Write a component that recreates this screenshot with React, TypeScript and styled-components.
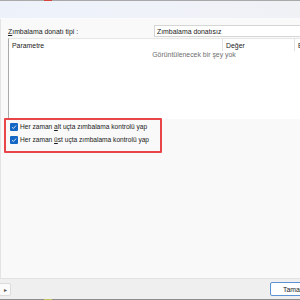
import React from "react";
import styled, { createGlobalStyle } from "styled-components";

const Global = createGlobalStyle`
  html, body { margin: 0; padding: 0; background: #f9f9f9; }
  body { font-family: "Liberation Sans", Arial, sans-serif; }
  * { box-sizing: border-box; }
`;

const Window = styled.div`
  width: 300px;
  height: 300px;
  overflow: hidden;
  display: flex;
  flex-direction: column;
  font-size: 6.9px;
  color: #222;
`;

const EdgeLine = styled.div<{ $accent: string; $base: string }>`
  height: 1px;
  flex: 0 0 1px;
  display: flex;
  background: ${(p) => p.$base};
  &::before {
    content: "";
    width: 8px;
    margin-left: 44px;
    background: ${(p) => p.$accent};
  }
`;

const HeaderStrip = styled.div`
  flex: 0 0 18px;
  background: linear-gradient(90deg, #edf2fa 0%, #eff2f9 50%, #f0f1f5 100%);
  border-bottom: 1px solid #fbfbfd;
`;

const Main = styled.div`
  flex: 1;
  background: #f9f9f9;
  border-left: 1px solid #e4e4e4;
  border-bottom: 1px solid #e2e2e2;
  display: flex;
  flex-direction: column;
  padding-top: 6px;
`;

const FormRow = styled.div`
  display: flex;
  align-items: center;
  height: 12px;
  padding-left: 7px;
`;

const Label = styled.label`
  width: 146px;
  color: #222;
  u { text-decoration: underline; }
`;

const Input = styled.div`
  flex: 1;
  height: 12px;
  background: #fff;
  border: 1px solid #d6d6d6;
  border-right: none;
  padding-left: 2px;
  display: flex;
  align-items: center;
  color: #222;
`;

const Grid = styled.div`
  margin: 1px 0 0 7px;
  height: 81px;
  background: #fff;
  border-left: 1px solid #a9a9a9;
  border-top: 1px solid #e6e6e6;
  display: flex;
  flex-direction: column;
  width: 360px;
`;

const GridHead = styled.div`
  display: grid;
  grid-template-columns: 213px 72px 1fr;
  height: 12px;
`;

const HeadCell = styled.div`
  display: flex;
  align-items: center;
  padding-left: 3px;
  color: #222;
  & + & { border-left: 1px solid #e2e2e2; }
`;

const Empty = styled.div`
  width: 300px;
  text-align: center;
  margin-left: 35px;
  color: #6d6d6d;
  line-height: 8px;
`;

const CheckGroup = styled.div`
  margin: -1px 0 0 3px;
  width: 158px;
  border: 2px solid #e8454b;
  border-radius: 1px;
  padding: 2px 0 0 4px;
  height: 35px;
  display: flex;
  flex-direction: column;
  gap: 4px;
`;

const CheckRow = styled.label`
  display: flex;
  align-items: center;
  gap: 2px;
  height: 9px;
  font-size: 6.6px;
  color: #1a1a1a;
  u { text-decoration: underline; }
`;

const Box = styled.span`
  width: 8px;
  height: 8px;
  border-radius: 1px;
  background: #1467c4;
  display: flex;
  align-items: center;
  justify-content: center;
`;

const Footer = styled.div`
  flex: 0 0 20px;
  background: #efefef;
  display: flex;
  align-items: center;
  justify-content: space-between;
`;

const NavButton = styled.button`
  width: 12px;
  height: 13px;
  margin: 0 0 0 -1px;
  padding: 0;
  background: #fbfbfb;
  border: 1px solid #dcdcdc;
  border-radius: 2px;
  display: flex;
  align-items: center;
  justify-content: center;
  color: #555;
  font-size: 6px;
`;

const OkButton = styled.button`
  width: 40px;
  height: 14px;
  margin-right: -10px;
  padding: 0 0 0 12px;
  background: #fff;
  border: 1px solid #5b93d6;
  border-radius: 2px;
  font-family: inherit;
  font-size: 6.9px;
  color: #222;
  text-align: left;
`;

const Check = () => (
  <Box>
    <svg width="6" height="6" viewBox="0 0 6 6">
      <path d="M1 3.2 L2.4 4.5 L5 1.6" fill="none" stroke="#fff" strokeWidth="0.8" />
    </svg>
  </Box>
);

export default function App() {
  return (
    <Window>
      <Global />
      <EdgeLine $base="#a9a9a9" $accent="#d9433d" />
      <HeaderStrip />
      <Main>
        <FormRow>
          <Label>
            <u>Z</u>ımbalama donatı tipi :
          </Label>
          <Input>Zımbalama donatısız</Input>
        </FormRow>
        <Grid>
          <GridHead>
            <HeadCell>Parametre</HeadCell>
            <HeadCell>Değer</HeadCell>
            <HeadCell>Birim</HeadCell>
          </GridHead>
          <Empty>Görüntülenecek bir şey yok</Empty>
        </Grid>
        <CheckGroup>
          <CheckRow>
            <Check />
            <span>
              Her zaman <u>a</u>lt uçta zımbalama kontrolü yap
            </span>
          </CheckRow>
          <CheckRow>
            <Check />
            <span>
              Her zaman <u>ü</u>st uçta zımbalama kontrolü yap
            </span>
          </CheckRow>
        </CheckGroup>
      </Main>
      <Footer>
        <NavButton>▸</NavButton>
        <OkButton>Tamam</OkButton>
      </Footer>
      <EdgeLine $base="#8c8c8c" $accent="#c8c25a" />
    </Window>
  );
}
